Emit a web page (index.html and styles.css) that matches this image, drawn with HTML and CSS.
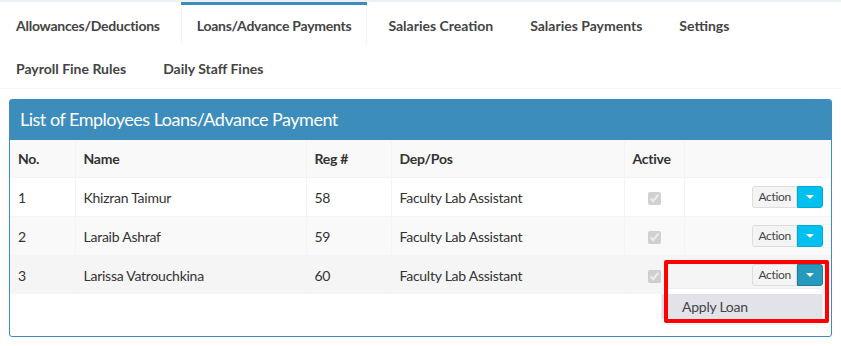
FILE: index.html
```html
<!DOCTYPE html>
<html lang="en">
<head>
    <meta charset="UTF-8">
    <meta name="viewport" content="width=device-width, initial-scale=1.0">
    <title>Loans/Advance Payments</title>
    <link rel="stylesheet" href="styles.css">
</head>
<body>
    <div class="content">
        <ul class="nav-tabs">
            <li><a href="#" class="tight">Allowances/Deductions</a></li>
            <li class="active"><a href="#" class="tight">Loans/Advance Payments</a></li>
            <li><a href="#">Salaries Creation</a></li>
            <li><a href="#">Salaries Payments</a></li>
            <li><a href="#">Settings</a></li>
            <li><a href="#">Payroll Fine Rules</a></li>
            <li><a href="#">Daily Staff Fines</a></li>
        </ul>

        <div class="box">
            <div class="box-header">
                <h3>List of Employees Loans/Advance Payment</h3>
            </div>
            <div class="box-body">
                <table class="table">
                    <colgroup>
                        <col style="width:65px">
                        <col style="width:231px">
                        <col style="width:85px">
                        <col style="width:233px">
                        <col style="width:60px">
                        <col>
                    </colgroup>
                    <tr class="head">
                        <th>No.</th>
                        <th>Name</th>
                        <th>Reg #</th>
                        <th>Dep/Pos</th>
                        <th>Active</th>
                        <th></th>
                    </tr>
                    <tr>
                        <td>1</td>
                        <td>Khizran Taimur</td>
                        <td>58</td>
                        <td>Faculty Lab Assistant</td>
                        <td class="center"><input type="checkbox" checked disabled></td>
                        <td>
                            <div class="btn-group">
                                <button class="btn">Action</button>
                                <button class="btn btn-info"><span class="caret"></span></button>
                            </div>
                        </td>
                    </tr>
                    <tr class="striped">
                        <td>2</td>
                        <td>Laraib Ashraf</td>
                        <td>59</td>
                        <td>Faculty Lab Assistant</td>
                        <td class="center"><input type="checkbox" checked disabled></td>
                        <td>
                            <div class="btn-group">
                                <button class="btn">Action</button>
                                <button class="btn btn-info"><span class="caret"></span></button>
                            </div>
                        </td>
                    </tr>
                    <tr class="hover">
                        <td>3</td>
                        <td>Larissa Vatrouchkina</td>
                        <td>60</td>
                        <td>Faculty Lab Assistant</td>
                        <td class="center"><input type="checkbox" checked disabled></td>
                        <td>
                            <div class="btn-group open">
                                <button class="btn">Action</button>
                                <button class="btn btn-info"><span class="caret"></span></button>
                                <ul class="dropdown-menu">
                                    <li><a href="#">Apply Loan</a></li>
                                </ul>
                                <div class="highlight"></div>
                            </div>
                        </td>
                    </tr>
                </table>
            </div>
        </div>
    </div>
</body>
</html>
```

FILE: styles.css
```css
body{
    margin:0;
    background:#ecf0f5;
    font-family:Lato, "Liberation Sans", sans-serif;
    font-size:14px;
    color:#333;
}
.content{
    margin-top:2px;
    background:#fff;
    height:344px;
}
.nav-tabs{
    list-style:none;
    margin:0;
    padding:0;
    display:flex;
    flex-wrap:wrap;
    border-bottom:1px solid #f4f4f4;
}
.nav-tabs li{
    border-top:3px solid transparent;
    margin-right:5px;
}
.nav-tabs li a{
    display:block;
    padding:10px 15px 9px;
    line-height:20px;
    border:1px solid transparent;
    border-bottom:0;
    color:#444;
    font-weight:bold;
    text-decoration:none;
}
.nav-tabs li a.tight{
    letter-spacing:-0.25px;
}
.nav-tabs li.active{
    border-top-color:#3c8dbc;
}
.nav-tabs li.active a{
    border-left-color:#f4f4f4;
    border-right-color:#f4f4f4;
}
.box{
    margin:10px 9px 0;
    border:1px solid #3c8dbc;
    border-radius:3px;
    background:#fff;
}
.box-header{
    background:#3c8dbc;
    padding:9px 10px 11px;
}
.box-header h3{
    margin:0;
    font-size:18px;
    font-weight:normal;
    line-height:20px;
    letter-spacing:-0.5px;
    color:#fff;
}
.box-body{
    padding-bottom:42px;
}
.table{
    width:100%;
    border-collapse:collapse;
    table-layout:fixed;
    letter-spacing:-0.25px;
}
.table th, .table td{
    padding:8px;
    line-height:21px;
    border:1px solid #f4f4f4;
    text-align:left;
    vertical-align:middle;
}
.table tr:first-child th{
    border-top:0;
}
.table th:first-child, .table td:first-child{
    border-left:0;
}
.table th:last-child, .table td:last-child{
    border-right:0;
}
.table tr:last-child td{
    border-bottom:0;
}
.table th{
    font-weight:bold;
}
.head, .striped{
    background:#f9f9f9;
}
.hover{
    background:#f5f5f5;
}
.center{
    text-align:center !important;
}
.center input{
    margin:0;
    vertical-align:middle;
}
.btn-group{
    position:relative;
    display:flex;
    justify-content:flex-end;
}
.btn{
    box-sizing:border-box;
    height:22px;
    font-family:inherit;
    font-size:12px;
    line-height:18px;
    letter-spacing:-0.3px;
    padding:1px 5px;
    margin:0;
    border:1px solid #ddd;
    background:#f4f4f4;
    color:#444;
    border-radius:3px 0 0 3px;
}
.btn-info{
    width:26px;
    padding:1px 8px;
    background:#00c0ef;
    border-color:#00acd6;
    border-radius:0 3px 3px 0;
    display:flex;
    align-items:center;
    justify-content:center;
}
.open .btn-info{
    background:#269abc;
    border-color:#1f7e9a;
}
.caret{
    display:block;
    width:0;
    height:0;
    border-top:4px solid #fff;
    border-left:4px solid transparent;
    border-right:4px solid transparent;
}
.dropdown-menu{
    position:absolute;
    top:100%;
    right:0;
    margin:2px 0 0;
    padding:5px 0;
    min-width:160px;
    list-style:none;
    background:#fff;
    border:1px solid #eee;
    border-radius:4px;
    text-align:left;
    z-index:2;
}
.dropdown-menu li a{
    display:block;
    padding:3px 20px 2px;
    line-height:20px;
    background:#e1e3e9;
    color:#444;
    text-decoration:none;
}
.highlight{
    position:absolute;
    right:-6px;
    top:-4px;
    width:165px;
    height:63px;
    box-sizing:border-box;
    border:4px solid #f00;
    border-radius:2px;
    z-index:3;
}
```
